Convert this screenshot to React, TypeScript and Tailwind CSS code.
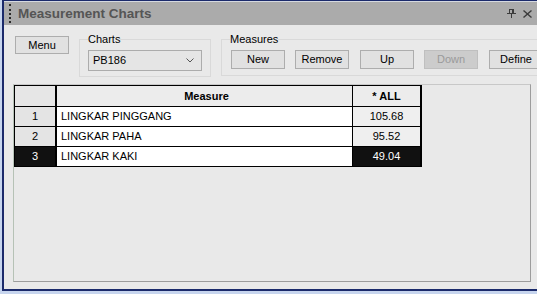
import React from "react";

const Btn = ({ label, className = "", disabled = false }: { label: string; className?: string; disabled?: boolean }) => (
  <div
    className={
      "shrink-0 flex items-center justify-center h-[19px] w-[54px] border text-[11px] leading-none " +
      (disabled
        ? "bg-[#cccccc] border-[#bfbfbf] text-[#9a9a9a] "
        : "bg-[#e1e1e1] border-[#adadad] text-black ") +
      className
    }
  >
    {label}
  </div>
);

const rows = [
  { n: "1", name: "LINGKAR PINGGANG", v: "105.68", sel: false },
  { n: "2", name: "LINGKAR PAHA", v: "95.52", sel: false },
  { n: "3", name: "LINGKAR KAKI", v: "49.04", sel: true },
];

export default function App() {
  return (
    <div className="w-[537px] h-[294px] overflow-hidden bg-[#c7d5ee] pl-[2px] pb-[3px] font-['Liberation_Sans',Arial,sans-serif]">
      <div className="h-full flex flex-col border-t border-l-2 border-b-2 border-[#1b2a6b] bg-[#e9e9e9]">
        {/* title bar */}
        <div className="h-[24px] flex items-center bg-[#ababab] border-t border-[#d5d9e0] shrink-0">
          <div className="ml-[5px] h-[19px] border-l-2 border-dotted border-[#2a2a2a]" />
          <div className="ml-[7px] text-[13.5px] font-bold text-[#555555] leading-none">Measurement Charts</div>
          <div className="ml-auto flex items-center mr-[5px] gap-[7px]">
            <svg width="9" height="9" viewBox="0 0 9 9" className="mt-[-1px]">
              <rect x="2.5" y="0.5" width="4" height="4" fill="none" stroke="#3c3c3c" />
              <rect x="5" y="0.5" width="1" height="4" fill="#3c3c3c" />
              <line x1="0" y1="4.5" x2="9" y2="4.5" stroke="#3c3c3c" />
              <line x1="4.5" y1="5" x2="4.5" y2="9" stroke="#3c3c3c" />
            </svg>
            <svg width="9" height="8" viewBox="0 0 9 8">
              <path d="M0.5 0.5 L8.5 7.5 M8.5 0.5 L0.5 7.5" stroke="#3c3c3c" strokeWidth="1.4" />
            </svg>
          </div>
        </div>

        {/* body */}
        <div className="flex-1 flex flex-col pl-[9px]">
          <div className="h-[59px] shrink-0 flex items-start pt-[11px]">
            <div className="shrink-0 ml-[2px] flex items-center justify-center h-[18px] w-[54px] border border-[#adadad] bg-[#e1e1e1] text-[11px] leading-none">
              Menu
            </div>
            <fieldset className="shrink-0 ml-[10px] -mt-[3px] w-[131px] border border-[#d9d9d9] pl-[8px] pr-[8px] pt-[4px] pb-[5px]">
              <legend className="text-[11px] leading-[13px] px-0">Charts</legend>
              <div className="h-[21px] w-[114px] flex items-center border border-[#acacac] bg-[#e5e5e5] pl-[4px] pr-[7px] text-[11px]">
                <span>PB186</span>
                <svg width="8" height="5" viewBox="0 0 8 5" className="ml-auto">
                  <path d="M0.5 0.5 L4 4 L7.5 0.5" fill="none" stroke="#555" strokeWidth="1" />
                </svg>
              </div>
            </fieldset>
            <fieldset className="shrink-0 ml-[10px] -mt-[3px] w-[340px] border border-[#d9d9d9] pl-[9px] pt-[4px] pb-[6px]">
              <legend className="text-[11px] leading-[13px] px-0 -ml-[1px]">Measures</legend>
              <div className="flex">
                <Btn label="New" />
                <Btn label="Remove" className="ml-[10px]" />
                <Btn label="Up" className="ml-[11px]" />
                <Btn label="Down" disabled className="ml-[10px]" />
                <Btn label="Define" className="ml-[11px] w-[46px]" />
              </div>
            </fieldset>
          </div>

          {/* grid area */}
          <div className="w-[518px] h-[198px] border-t border-l border-t-[#c8c8c8] border-l-[#b6c2b6] border-r border-b border-r-[#9c9c9c] border-b-[#9c9c9c]">
            <div className="w-[408px] border-t border-l border-black text-[11px] text-black">
              <div className="flex h-[21px]">
                <div className="w-[42px] bg-[#e6e6e6] border-r-2 border-b border-black" />
                <div className="w-[296px] bg-[#ececec] border-r border-b border-black flex items-center justify-center font-bold pl-[4px]">
                  Measure
                </div>
                <div className="w-[69px] bg-[#ececec] border-r-2 border-b border-black flex items-center justify-center font-bold">
                  * ALL
                </div>
              </div>
              {rows.map((r) => (
                <div key={r.n} className="flex h-[20px]">
                  <div
                    className={
                      "w-[42px] border-r-2 border-b border-black flex items-center justify-center " +
                      (r.sel ? "bg-[#111111] text-white" : "bg-[#e4e4e4]")
                    }
                  >
                    {r.n}
                  </div>
                  <div className="w-[296px] bg-white border-r border-b border-black flex items-center pl-[4px]">
                    {r.name}
                  </div>
                  <div
                    className={
                      "w-[69px] border-r-2 border-b border-black flex items-center justify-center " +
                      (r.sel ? "bg-[#111111] text-white" : "bg-[#efefef]")
                    }
                  >
                    {r.v}
                  </div>
                </div>
              ))}
            </div>
          </div>
        </div>
      </div>
    </div>
  );
}
